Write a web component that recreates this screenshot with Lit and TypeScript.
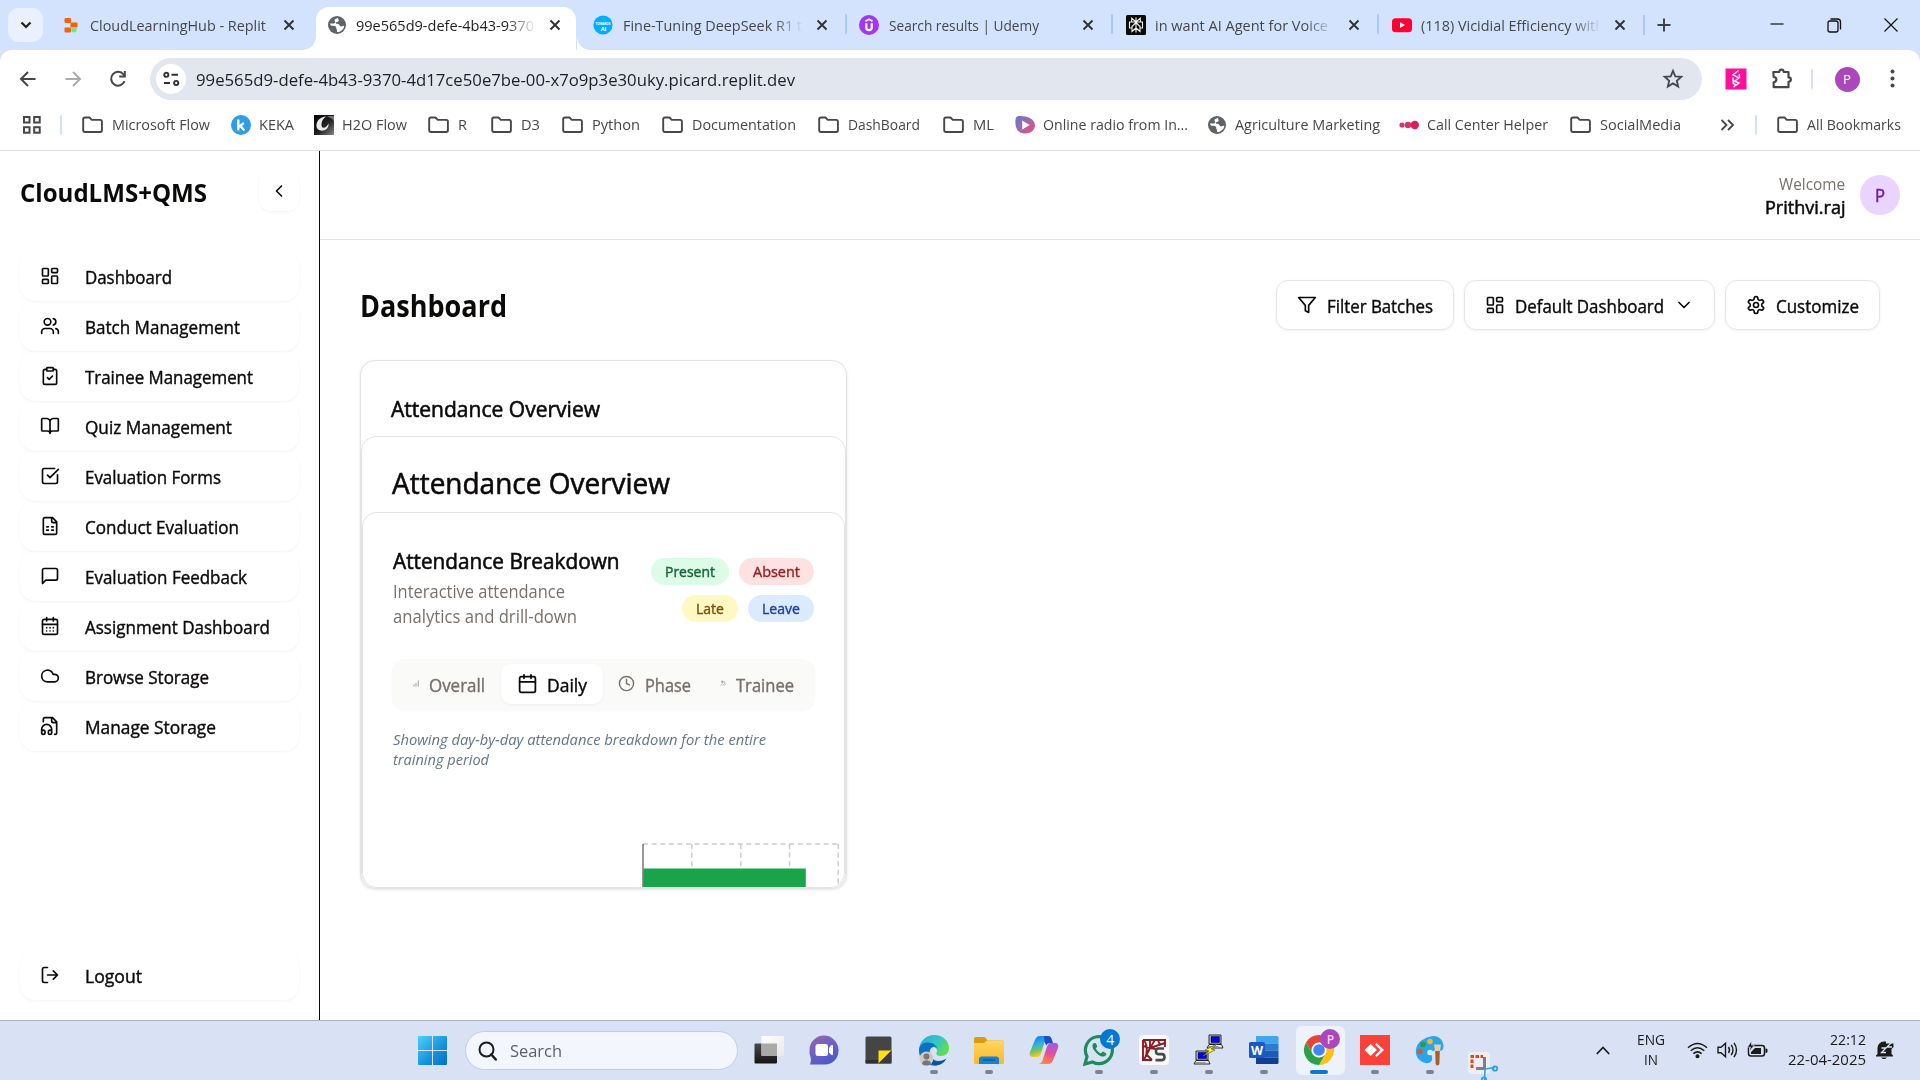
import { LitElement, html, css, svg, nothing } from "lit";
import { customElement, property } from "lit/decorators.js";

/** A single line of text that occupies an exact width. */
@customElement("fit-text")
class FitText extends LitElement {
  static styles = css`
    :host { display: inline-block; white-space: pre; flex: none; }
    .run { display: inline-block; transform-origin: 0 50%; vertical-align: top; }
  `;
  @property() text = "";
  @property({ type: Number }) w = 0;
  updated() {
    const run = this.renderRoot.querySelector(".run") as HTMLElement;
    run.style.transform = "none";
    const natural = run.getBoundingClientRect().width;
    if (natural && this.w) {
      run.style.transform = `scaleX(${this.w / natural})`;
      this.style.width = `${this.w}px`;
    }
  }
  render() {
    return html`<span class="run">${this.text}</span>`;
  }
}

const t = (text: string, w: number) => html`<fit-text .text=${text} .w=${w}></fit-text>`;

const stroke = (size: number, body: unknown, width = 2) => html`
  <svg class="ico" width=${size} height=${size} viewBox="0 0 24 24" fill="none" stroke="currentColor"
    stroke-width=${width} stroke-linecap="round" stroke-linejoin="round">${body}</svg>`;

const P = {
  dash: svg`<rect x="3" y="3" width="7" height="9" rx="1"/><rect x="14" y="3" width="7" height="5" rx="1"/><rect x="14" y="12" width="7" height="9" rx="1"/><rect x="3" y="16" width="7" height="5" rx="1"/>`,
  users: svg`<path d="M16 21v-2a4 4 0 0 0-4-4H6a4 4 0 0 0-4 4v2M22 21v-2a4 4 0 0 0-3-3.87M16 3.13a4 4 0 0 1 0 7.75"/><circle cx="9" cy="7" r="4"/>`,
  clip: svg`<rect x="8" y="2" width="8" height="4" rx="1"/><path d="M16 4h2a2 2 0 0 1 2 2v14a2 2 0 0 1-2 2H6a2 2 0 0 1-2-2V6a2 2 0 0 1 2-2h2M9 14l2 2 4-4"/>`,
  book: svg`<path d="M12 7v14M3 18a1 1 0 0 1-1-1V4a1 1 0 0 1 1-1h5a4 4 0 0 1 4 4 4 4 0 0 1 4-4h5a1 1 0 0 1 1 1v13a1 1 0 0 1-1 1h-6a3 3 0 0 0-3 3 3 3 0 0 0-3-3z"/>`,
  check: svg`<path d="M21 10.5V19a2 2 0 0 1-2 2H5a2 2 0 0 1-2-2V5a2 2 0 0 1 2-2h12.5M9 11l3 3L22 4"/>`,
  sheet: svg`<path d="M15 2H6a2 2 0 0 0-2 2v16a2 2 0 0 0 2 2h12a2 2 0 0 0 2-2V7ZM14 2v4a2 2 0 0 0 2 2h4M8 13h2M14 13h2M8 17h2M14 17h2"/>`,
  msg: svg`<path d="M21 15a2 2 0 0 1-2 2H7l-4 4V5a2 2 0 0 1 2-2h14a2 2 0 0 1 2 2z"/>`,
  days: svg`<rect x="3" y="4" width="18" height="18" rx="2"/><path d="M8 2v4M16 2v4M3 10h18M8 14h.01M12 14h.01M16 14h.01M8 18h.01M12 18h.01M16 18h.01"/>`,
  cal: svg`<rect x="3" y="4" width="18" height="18" rx="2"/><path d="M8 2v4M16 2v4M3 10h18"/>`,
  cloud: svg`<path d="M17.5 19H9a7 7 0 1 1 6.71-9h1.79a4.5 4.5 0 1 1 0 9Z"/>`,
  audio: svg`<path d="M17.5 22h.5a2 2 0 0 0 2-2V7l-5-5H6a2 2 0 0 0-2 2v3M14 2v4a2 2 0 0 0 2 2h4M2 19a2 2 0 1 1 4 0v1a2 2 0 1 1-4 0v-4a6 6 0 0 1 12 0v4a2 2 0 1 1-4 0v-1a2 2 0 1 1 4 0"/>`,
  out: svg`<path d="M16 17l5-5-5-5M21 12H9M9 21H5a2 2 0 0 1-2-2V5a2 2 0 0 1 2-2h4"/>`,
  filter: svg`<path d="M22 3H2l8 9.46V19l4 2v-8.54L22 3z"/>`,
  gear: svg`<path d="M12.22 2h-.44a2 2 0 0 0-2 2v.18a2 2 0 0 1-1 1.73l-.43.25a2 2 0 0 1-2 0l-.15-.08a2 2 0 0 0-2.73.73l-.22.38a2 2 0 0 0 .73 2.73l.15.1a2 2 0 0 1 1 1.72v.51a2 2 0 0 1-1 1.74l-.15.09a2 2 0 0 0-.73 2.73l.22.38a2 2 0 0 0 2.73.73l.15-.08a2 2 0 0 1 2 0l.43.25a2 2 0 0 1 1 1.73V20a2 2 0 0 0 2 2h.44a2 2 0 0 0 2-2v-.18a2 2 0 0 1 1-1.73l.43-.25a2 2 0 0 1 2 0l.15.08a2 2 0 0 0 2.73-.73l.22-.39a2 2 0 0 0-.73-2.73l-.15-.08a2 2 0 0 1-1-1.74v-.5a2 2 0 0 1 1-1.74l.15-.09a2 2 0 0 0 .73-2.73l-.22-.38a2 2 0 0 0-2.73-.73l-.15.08a2 2 0 0 1-2 0l-.43-.25a2 2 0 0 1-1-1.73V4a2 2 0 0 0-2-2z"/><circle cx="12" cy="12" r="3"/>`,
  down: svg`<path d="M6 9l6 6 6-6"/>`,
  left: svg`<path d="M15 18l-6-6 6-6"/>`,
  clock: svg`<circle cx="12" cy="12" r="10"/><path d="M12 6v6l4 2"/>`,
};

const globe = html`<svg class="ico" width="20" height="20" viewBox="0 0 20 20"><circle cx="10" cy="10" r="9" fill="#5f6368"/><path d="M10.500 2.700C9.800 3.900 7.900 3.600 7.500 4.900c-.3 1.200 1 1.500.8 2.600-.2 1-1.800.9-3.300.9H3.100c.2 2 1.200 2.300 2.900 2.400 2 .1 3.200.4 3.200 1.900 0 1.400.8 1.500.8 2.900v1.500c3.800 0 6.800-2.600 7.200-6.100-1.200-.6-1.700.7-3.200.5-1.600-.2-1.400-2-2.900-2.400-1.200-.3-2.300.1-2.300-1 0-1.500 2.200-.9 2.800-2.100.5-1.100-.3-1.900-1.100-3.300z" fill="#fff"/></svg>`;

const folder = html`<svg class="ico" width="23" height="20" viewBox="0 0 23 20"><path d="M2.200 4.200q0-1.700 1.700-1.700h4.600l2.300 2.400h8.400q1.700 0 1.700 1.700v8.700q0 1.700-1.700 1.700H3.900q-1.700 0-1.700-1.700z" fill="none" stroke="#474747" stroke-width="1.900" stroke-linejoin="round"/></svg>`;

const fav = {
  replit: html`<svg class="ico" width="20" height="20" viewBox="0 0 20 20"><rect x="3.500" y="3" width="6.500" height="5" rx="1" fill="#f26207"/><rect x="9.500" y="7.500" width="7" height="5" rx="1" fill="#f26207"/><rect x="3.500" y="12.500" width="6.500" height="5" rx="1" fill="#f26207"/><circle cx="13" cy="14.800" r="2.700" fill="#6ee787"/></svg>`,
  towards: html`<svg class="ico" width="20" height="20" viewBox="0 0 20 20"><circle cx="10" cy="10" r="9.600" fill="#00aeff"/><text x="10" y="10" text-anchor="middle" font-size="3" font-weight="700" fill="#fff" font-family="Open Sans">TOWARDS</text><text x="10.500" y="15.800" text-anchor="middle" font-size="5.500" font-weight="700" fill="#fff" font-family="Open Sans">AI</text></svg>`,
  udemy: html`<svg class="ico" width="20" height="20" viewBox="0 0 20 20"><circle cx="10" cy="10" r="10" fill="#a435f0"/><path d="M6.500 6.300L10 4.200l3.500 2.100" fill="none" stroke="#fff" stroke-width="1.800"/><path d="M7.300 8.300v4.200a2.700 2.700 0 0 0 5.400 0V8.300" fill="none" stroke="#fff" stroke-width="2.200"/></svg>`,
  perplexity: html`<svg class="ico" width="20" height="20" viewBox="0 0 20 20"><rect width="20" height="20" rx="1.500" fill="#0b0b0b"/><path d="M10 2.500v15M10 7L5.700 3.200V7M10 7l4.300-3.800V7M10 7H3.500v6H6M10 7h6.500v6H14M10 7.500L6 11.500v5l4-3.500M10 7.500l4 4v5L10 13" fill="none" stroke="#f3f3ee" stroke-width="1.100"/></svg>`,
  youtube: html`<svg class="ico" width="20" height="20" viewBox="0 0 20 20"><rect x="0" y="3.200" width="20" height="14" rx="3.500" fill="#ff0033"/><path d="M8 7.300v5.600l5-2.800z" fill="#fff"/></svg>`,
};

const bm = {
  keka: html`<svg class="ico" width="20" height="20" viewBox="0 0 20 20"><circle cx="10" cy="10" r="10" fill="#2e9ce6"/><path d="M7.300 4.500v11M12.800 8l-5 3.800M9.300 10.800l4 4.700" stroke="#fff" stroke-width="2.300" fill="none"/></svg>`,
  h2o: html`<svg class="ico" width="20" height="20" viewBox="0 0 20 20"><defs><linearGradient id="h2" x1="0" y1="0" x2="1" y2="1"><stop offset="0" stop-color="#000"/><stop offset=".55" stop-color="#222"/><stop offset="1" stop-color="#888"/></linearGradient></defs><rect width="20" height="20" fill="url(#h2)"/><path d="M12.500 1.500C5.500 2 2 6.500 2.500 11.500c.4 3.800 4.500 5 8.500 3.500 2.500-1 4-4 3.500-6.500-1 2-2.500 4-4.500 4.300-2.200.3-3-2-2.300-5C8.500 4.500 10 2.800 12.500 1.500z" fill="#e8e8e8"/><path d="M13 1l7 0v5c-1.500-2-4-3.500-7-5z" fill="#777"/></svg>`,
  radio: html`<svg class="ico" width="20" height="20" viewBox="0 0 20 20"><defs><linearGradient id="ra" x1="0" y1="0" x2="1" y2="1"><stop offset="0" stop-color="#5b7fc8"/><stop offset=".5" stop-color="#a567a8"/><stop offset="1" stop-color="#f2506c"/></linearGradient></defs><path d="M2 1.500C8 0 20 2.500 20 10.500c0 5-5 8-10 8S1 16 .5 9C.3 6 .3 2.500 2 1.500z" fill="url(#ra)"/><path d="M7.200 5.500v9l7.500-4.500z" fill="#fff"/></svg>`,
  cch: html`<svg class="ico" width="20" height="20" viewBox="0 0 20 20"><circle cx="3" cy="10" r="2.600" fill="#d6336c"/><circle cx="9" cy="10" r="3.200" fill="#d6336c"/><circle cx="15.800" cy="10" r="4.200" fill="#d6205c"/></svg>`,
};

type Tab = { icon: unknown; text: string; w: number; active?: boolean; fade?: boolean; sep?: boolean };
const tabs: Tab[] = [
  { icon: fav.replit, text: "CloudLearningHub - Replit", w: 176 },
  { icon: globe, text: "99e565d9-defe-4b43-9370", w: 178, active: true, fade: true },
  { icon: fav.towards, text: "Fine-Tuning DeepSeek R1 t", w: 179, fade: true },
  { icon: fav.udemy, text: "Search results | Udemy", w: 150, sep: true },
  { icon: fav.perplexity, text: "in want AI Agent for Voice", w: 173, sep: true, fade: true },
  { icon: fav.youtube, text: "(118) Vicidial Efficiency with", w: 183, sep: true, fade: true },
];

const marks: [unknown, string, number, number][] = [
  [folder, "Microsoft Flow", 98, 150],
  [bm.keka, "KEKA", 35, 83],
  [bm.h2o, "H2O Flow", 65, 113],
  [folder, "R", 9, 63],
  [folder, "D3", 19, 71],
  [folder, "Python", 48, 100],
  [folder, "Documentation", 104, 156],
  [folder, "DashBoard", 72, 125],
  [folder, "ML", 21, 73],
  [bm.radio, "Online radio from In...", 145, 192],
  [globe, "Agriculture Marketing", 145, 192],
  [bm.cch, "Call Center Helper", 121, 170],
  [folder, "SocialMedia", 81, 142.5],
];

const nav: [unknown, string, number][] = [
  [P.dash, "Dashboard", 87],
  [P.users, "Batch Management", 155],
  [P.clip, "Trainee Management", 168],
  [P.book, "Quiz Management", 147],
  [P.check, "Evaluation Forms", 136],
  [P.sheet, "Conduct Evaluation", 154],
  [P.msg, "Evaluation Feedback", 162],
  [P.days, "Assignment Dashboard", 185],
  [P.cloud, "Browse Storage", 124],
  [P.audio, "Manage Storage", 131],
];

const app = (body: unknown) => html`<svg class="ico" width="32" height="32" viewBox="0 0 32 32">${body}</svg>`;
const laptop = svg`<path d="M3 1h12v9H3z" fill="#ccc" stroke="#000" stroke-width=".8"/><path d="M5 2.500h8.500v6H5z" fill="#00f" stroke="#000" stroke-width=".5"/><path d="M1 14l2-3.500h12.500L17 14z" fill="#e6e6e6" stroke="#000" stroke-width=".8"/><path d="M2.500 12.500h10" stroke="#888" stroke-width=".8"/>`;

const apps: { icon: unknown; run?: boolean; on?: boolean; badge?: string; low?: boolean; p?: boolean }[] = [
  { icon: app(svg`<defs><linearGradient id="tv" x1="0" y1="0" x2="0" y2="1"><stop offset="0" stop-color="#4a4a4a"/><stop offset="1" stop-color="#151515"/></linearGradient><linearGradient id="tw" x1="0" y1="0" x2="1" y2="1"><stop offset="0" stop-color="#fff"/><stop offset="1" stop-color="#e8e8e8"/></linearGradient></defs><rect x="1.500" y="9.500" width="22.500" height="20" rx="1" fill="url(#tv)"/><rect x="8.500" y="2" width="22.500" height="20" rx="1" fill="url(#tw)"/><path d="M8.500 9.500H24V22H9.500a1 1 0 0 1-1-1z" fill="#a9a9a9"/>`) },
  { icon: app(svg`<defs><linearGradient id="tm" x1="0" y1="0" x2=".5" y2="1"><stop offset="0" stop-color="#9a6a98"/><stop offset=".45" stop-color="#7462c4"/><stop offset="1" stop-color="#5058c8"/></linearGradient></defs><path d="M16 1.500a14.500 15 0 0 1 14.500 15C30.500 25 24 31 16 30.500H2c1-3 1-5 .8-6.500A15 15 0 0 1 1.500 16 14.500 14.500 0 0 1 16 1.500z" fill="url(#tm)"/><rect x="7.500" y="10" width="12.500" height="12" rx="2.500" fill="#fff"/><path d="M21 13.500l2.500-2.500q1.500-.5 1.500 1v8q0 1.500-1.500 1L21 18.500z" fill="#fff"/>`) },
  { icon: app(svg`<rect x="2.500" y="2.500" width="26" height="27" rx="1.500" fill="#454545"/><rect x="2.500" y="26" width="13" height="3.500" fill="#303030"/><path d="M15.500 16.500h13l-13 13z" fill="#ffde14"/><path d="M15.500 29.500l13-13v13z" fill="#3b3b3b"/>`) },
  { run: true, icon: app(svg`<defs><linearGradient id="e1" x1="0" y1="0" x2="1" y2=".5"><stop offset="0" stop-color="#2aa8e0"/><stop offset=".6" stop-color="#33c6c8"/><stop offset="1" stop-color="#5fdc55"/></linearGradient></defs><path d="M1 17C1 8 7 1 16.500 1 25 1 31 7 31 14c0 5-3.500 8-8 8-3.500 0-5.500-1.500-4.500-3 1.500-2.500 0-6-4-6C9 13 4 14 1 17z" fill="url(#e1)"/><path d="M1 17c0-6 4-8.500 9-8.500 5 0 8.500 3 9.500 6-1.500-1.500-3-2-4.500-1.500-4 1.500-4.500 7-1 11 3 3.500 8 4 14 1-2.500 4.500-7 6.500-12 6.500C8 31.500 1 25 1 17z" fill="#0f6fc4"/><path d="M12.500 16c-1.500 4 .5 10 6 11.500 3 .8 7-.5 10-3-2.500 4.500-7 7-12 7-4-1-7-10-4-15.500z" fill="#0d52a0"/><circle cx="8.500" cy="24.500" r="7" fill="#cfcac3"/><circle cx="8.500" cy="22.500" r="3" fill="#777"/><path d="M4 30c0-5 9-5 9 0-2.500 2-6.500 2-9 0z" fill="#777"/>`) },
  { run: true, icon: app(svg`<defs><linearGradient id="fo" x1="0" y1="0" x2="0" y2="1"><stop offset="0" stop-color="#ffd75e"/><stop offset="1" stop-color="#f9b82a"/></linearGradient></defs><path d="M1 5q0-2 2-2h8q1.500 0 2 1.500l1.500 2H29q2 0 2 2V14H1z" fill="#dd9a0c"/><path d="M1 9h10l3-2.500h15q2 0 2 2v20q0 1.500-2 1.500H3q-2 0-2-1.500z" fill="url(#fo)"/><path d="M6 30v-5q0-2.500 2.500-2.500h15q2.500 0 2.500 2.500v5z" fill="#1582d2"/><path d="M10 26h12" stroke="#0a5596" stroke-width="1.300"/>`) },
  { icon: app(svg`<defs><linearGradient id="c1" x1="0" y1="0" x2=".3" y2="1"><stop offset="0" stop-color="#1a6fe0"/><stop offset=".45" stop-color="#2bb0e0"/><stop offset=".75" stop-color="#7cc45a"/><stop offset="1" stop-color="#ffc928"/></linearGradient><linearGradient id="c2" x1=".6" y1="0" x2=".3" y2="1"><stop offset="0" stop-color="#a259e8"/><stop offset=".5" stop-color="#e8508c"/><stop offset="1" stop-color="#ff8a3c"/></linearGradient></defs><path d="M13 30h7c3 0 4.500-2 5.500-5l4.500-11c1-3-.5-5-3-5h-4c-2.500 0-3.500 2-4.500 5l-3.500 11c-.6 2-2 5-4.500 5z" fill="url(#c2)"/><path d="M19 2h-7C9 2 7.500 4 6.500 7L2 18c-1 3 .5 5 3 5h4c2.500 0 3.500-2 4.500-5L17 7c.6-2 2-5 4.500-5z" fill="url(#c1)"/><path d="M16 2h4.500c2 0 3 2 3.500 4l1 3h-3c-2 0-3 1.200-3.700 2.500L16.500 8z" fill="#1d4fc4"/>`) },
  { run: true, badge: "4", icon: app(svg`<path d="M2 30l2-7.500A13.500 13.500 0 1 1 9.500 28z" fill="none" stroke="#1f8a5b" stroke-width="3.200"/><path d="M11 9c-2 1.500-2.300 4 .5 7.800 3.500 4.700 7.500 7 10.500 5.200 1.500-1 1.500-2.200 1-2.700l-3.200-1.700-2 1.800c-2-.8-4-2.700-5-4.900l1.500-2L13 9.200z" fill="#1f8a5b"/>`) },
  { run: true, icon: app(svg`<rect x="1" y="1" width="30" height="30" rx="4" fill="#f8f8f8"/><path d="M5 6h22v7M5 6v20h9M5 6c5 3 5 16 0 20M12 6v8L27 9M5 12l7 2 5-8M8 20l6 6M12 14l-3 6M12 14l6 1M20 6l2 5" fill="none" stroke="#8c1c24" stroke-width="1.900"/><path d="M26 14.500h-6q-2 0-2 2.800t2 2.800h4q2.500 0 2.500 3t-2.500 3h-6.500" fill="none" stroke="#4a4a4a" stroke-width="2.600"/>`) },
  { run: true, icon: app(svg`<g transform="translate(13 0)">${laptop}</g><g transform="translate(0 16)">${laptop}</g><path d="M24 10l-12 6 4 1-6 5 12-6-4-1z" fill="#ff0" stroke="#555" stroke-width=".7"/>`) },
  { run: true, icon: app(svg`<path d="M8 2h21q1.500 0 1.500 1.500V9.500H8z" fill="#41a5ee"/><path d="M8 9.500h22.500v7H8z" fill="#2b7cd3"/><path d="M8 16.500h22.500v7H8z" fill="#185abd"/><path d="M8 23.500h22.500v5q0 1.500-1.500 1.500H8z" fill="#103f91"/><rect x="1" y="8" width="16" height="16" rx="1.500" fill="#185abd"/><text x="9" y="20.500" text-anchor="middle" font-size="12.500" font-weight="700" fill="#fff" font-family="Open Sans">W</text>`) },
  { on: true, p: true, icon: app(svg`<circle cx="16" cy="16" r="15" fill="#fff"/><path d="M16 1a15 15 0 0 1 13 7.500H16A7.500 7.500 0 0 0 9.500 19.700L3 8.500A15 15 0 0 1 16 1z" fill="#ea4335"/><path d="M29 8.500A15 15 0 0 1 16 31l6.500-11.300A7.500 7.500 0 0 0 16 8.500z" fill="#fbc116"/><path d="M3 8.500l6.500 11.200a7.500 7.500 0 0 0 13 0L16 31A15 15 0 0 1 3 8.500z" fill="#28a148"/><circle cx="16" cy="16" r="7.200" fill="#fff"/><circle cx="16" cy="16" r="5.800" fill="#4285f4"/>`) },
  { run: true, icon: app(svg`<rect x="1" y="1" width="30" height="30" fill="#fb4139"/><path d="M5.500 16l6.200-6 6.200 6-6.200 6z" fill="#fff"/><path d="M16 10.500l1.500-1.500 7.500 7-7.500 7-1.500-1.500 5.500-5.500z" fill="#fff"/>`) },
  { run: true, icon: app(svg`<path d="M15 3C22 0 29 4 29.500 12c0 6-4 5-8 4.500-4-.3-4.500 3-3.500 6.500 1 4-2.500 7-6.500 6C5 27.500 1 22 2 15.500 3 9 8 5 15 3z" fill="#2aa5ea"/><circle cx="9" cy="10.500" r="2.800" fill="#2d9b3f"/><circle cx="16" cy="7.500" r="2.800" fill="#f6b91c"/><circle cx="6" cy="17.500" r="2.800" fill="#d75836"/><circle cx="16" cy="18.500" r="2.800" fill="#d5f0ff"/><path d="M20 10.500h7l-1 6.500h-5z" fill="#e8cdaa"/><path d="M21.200 17h4.600l-.4 13q-1.900 3-3.800 0z" fill="#a4622a"/>`) },
  { low: true, run: true, icon: app(svg`<rect x="0" y="0" width="22" height="22" rx="3" fill="#eeeef0"/><path d="M4 16V4.500h11" fill="none" stroke="#e0451f" stroke-width="3" stroke-dasharray="3.500 1.500"/><path d="M15 5h3v13H8v-3h7z" fill="#7e7e86"/><path d="M17 17l10-1.500M17 17l-.5 11" stroke="#2ca1e2" stroke-width="1.600"/><circle cx="27" cy="16.500" r="2.200" fill="none" stroke="#2ca1e2" stroke-width="1.800"/><circle cx="16" cy="27.500" r="2.200" fill="none" stroke="#2ca1e2" stroke-width="1.800"/>`) },
];

@customElement("app-root")
class AppRoot extends LitElement {
  static styles = css`
    :host {
      display: flex; flex-direction: column; width: 1920px; height: 1080px; overflow: hidden;
      font-family: "Open Sans", "Noto Sans", sans-serif; background: #fff; color: #0c0a09;
    }
    * { box-sizing: border-box; }
    .ico { display: block; flex: none; overflow: visible; }

    /* browser tab strip */
    .strip { height: 50px; flex: none; background: #d3e3fd; display: flex; align-items: stretch; }
    .tabsearch { width: 35px; height: 34px; margin: 8px 4px 0 8px; border-radius: 11px; background: #e9f1fe; display: grid; place-items: center; color: #1f1f1f; }
    .tab { width: 266.300px; flex: none; padding: 7px 3px 0; position: relative; color: #45474a; font-size: 14.800px; }
    .tab.sep::before { content: ""; position: absolute; left: -1px; top: 14px; width: 2px; height: 20px; border-radius: 1px; background: #a8c7fa; }
    .tabin { height: 43px; padding: 0 0 7px 10.500px; display: flex; align-items: center; }
    .tab.active { color: #1f1f1f; }
    .tab.active .tabin { background: #fff; border-radius: 13px 13px 0 0; width: 260px; }
    .tab.active::before, .tab.active::after { content: ""; position: absolute; bottom: 0; width: 13px; height: 13px; }
    .tab.active::before { left: -10px; background: radial-gradient(circle at 0 0, #d3e3fd 12.500px, #fff 13px); }
    .tab.active::after { right: -10px; background: radial-gradient(circle at 100% 0, #d3e3fd 12.500px, #fff 13px); }
    .title { width: 184px; margin: 0 3px 1px 9.500px; overflow: hidden; white-space: nowrap; line-height: 22px; display: flex; }
    .title.fade { -webkit-mask-image: linear-gradient(90deg, #000 150px, transparent 180px); mask-image: linear-gradient(90deg, #000 150px, transparent 180px); }
    .x { width: 24px; display: grid; place-items: center; color: #303134; }
    .plus { width: 40px; display: grid; place-items: center; color: #3c3f43; position: relative; left: -1px; }
    .plus::before { content: ""; position: absolute; left: -1px; top: 15px; width: 2px; height: 20px; background: #a8c7fa; }
    .win { margin-left: auto; display: flex; align-items: center; padding-right: 19px; gap: 37px; color: #111; }

    /* toolbar */
    .corner { background: #d3e3fd; flex: none; }
    .toolbar { height: 59px; background: #fff; border-radius: 12px 12px 0 0; display: flex; align-items: center; padding: 0 0 1px 16px; color: #474747; }
    .navs { display: flex; gap: 21px; width: 134px; }
    .omni { width: 1552px; height: 42px; border-radius: 21px; background: #e1e6ef; display: flex; align-items: center; padding: 0 17px 0 6px; font-size: 17.200px; color: #1f1f1f; }
    .site { width: 30px; height: 30px; border-radius: 50%; background: #fff; display: grid; place-items: center; margin-right: 10px; }
    .omni .star { margin-left: auto; color: #474747; }
    .tools { display: flex; align-items: center; flex: 1; padding-left: 22.500px; }
    .puzzle { margin: 0 16px 0 22px; }
    .vr { width: 2px; height: 20px; background: #d3e3fd; border-radius: 1px; }
    .ava { width: 25px; height: 25px; border-radius: 50%; background: #ab47bc; color: #fff; font-size: 13px; display: grid; place-items: center; margin: 0 30px 0 22px; }
    .bar { height: 42px; flex: none; display: flex; align-items: center; padding: 0 0 10px 22px; font-size: 14.800px; color: #45474a; border-bottom: 1px solid #dedfe1; }
    .bar .vr { margin: 0 19px 0 18px; }
    .bar .vr.end { margin: 0 19px 0 15px; }
    .mark { display: flex; align-items: center; gap: 8px; flex: none; line-height: 22px; }
    .mark fit-text { margin-bottom: 1px; }

    /* page */
    .page { flex: 1; min-height: 0; display: flex; }
    .side { width: 320px; flex: none; border-right: 1.500px solid #0a0a0a; display: flex; flex-direction: column; padding: 20px 20px 20px; }
    .brand { display: flex; justify-content: space-between; align-items: center; height: 40px; margin-bottom: 40px; font-size: 24.500px; font-weight: 700; line-height: 34px; }
    .brand fit-text { margin-top: 4px; }
    .soft { box-shadow: 0 1px 3px rgba(0, 0, 0, .055); }
    .fold { width: 40px; height: 40px; border-radius: 12px; display: grid; place-items: center; }
    .item, .btn, .seg { -webkit-text-stroke: .4px currentColor; }
    .item { height: 50px; flex: none; border-radius: 15px; display: flex; align-items: center; padding-left: 20px; font-size: 17.300px; line-height: 24px; }
    .item .ico { margin-right: 25px; margin-bottom: 1px; }
    .item fit-text { margin-top: 3px; }
    .item.out { margin-top: auto; }
    .main { flex: 1; display: flex; flex-direction: column; }
    .head { height: 89px; flex: none; border-bottom: 1px solid #e3e3e3; display: flex; justify-content: flex-end; align-items: center; padding: 0 20px 1px 0; gap: 15px; }
    .who { display: flex; flex-direction: column; align-items: flex-end; font-size: 15.500px; color: #78716c; line-height: 24px; padding-top: 2px; }
    .who .name { font-size: 17.300px; -webkit-text-stroke: .5px currentColor; color: #0c0a09; }
    .face { width: 40px; height: 40px; border-radius: 50%; background: #e9d5ff; color: #6b21a8; font-size: 17.300px; -webkit-text-stroke: .5px currentColor; display: grid; place-items: center; padding-top: 1px; }
    .body { padding: 40px; }
    .titlebar { height: 50px; display: flex; align-items: center; gap: 10px; margin-bottom: 30px; }
    .h1 { font-size: 29.500px; font-weight: 700; line-height: 40px; margin-right: auto; padding-top: 1px; }
    .btn { height: 50px; border: 1px solid #e5e5e5; border-radius: 12px; box-shadow: 0 1px 3px rgba(0,0,0,.06); display: flex; align-items: center; padding: 0 20px; font-size: 17.300px; }
    .btn fit-text { margin: 2px 0 0 10.500px; }
    .btn.wide fit-text { margin-left: 9.500px; }
    .btn .last { margin-left: 10px; }

    .card { border: 1px solid #e3e3e3; border-radius: 15px; overflow: hidden; background: #fff; }
    .c1 { width: 487px; height: 529px; box-shadow: 0 1px 3px rgba(0,0,0,.1); }
    .c1 > .c2 { height: 452px; }
    .c2 > .c3 { height: 375px; border-bottom: 0; }
    .ch { height: 75px; -webkit-text-stroke: .6px currentColor; font-size: 22px; line-height: 30px; padding: 32px 30px 0; }
    .ch.big { font-size: 29px; line-height: 38px; padding-top: 27px; }
    .ch3 { display: flex; justify-content: space-between; padding: 32px 30px 0 30px; }
    .ct { -webkit-text-stroke: .6px currentColor; font-size: 22px; line-height: 30px; margin-bottom: 4px; display: flex; }
    .cd { font-size: 17.300px; line-height: 25px; color: #78716c; display: flex; }
    .badges { width: 170px; display: flex; flex-wrap: wrap; gap: 10px; justify-content: flex-end; align-content: flex-start; padding-top: 13px; font-size: 14.800px; -webkit-text-stroke: .4px currentColor; }
    .badge { height: 27px; border-radius: 14px; display: flex; align-items: center; padding: 0 14px 2px; }
    .g { background: #dcfce7; color: #166534; }
    .r { background: #fee2e2; color: #991b1b; }
    .y { background: #fef9c3; color: #854d0e; }
    .b { background: #dbeafe; color: #1e40af; }
    .seg { width: 423px; height: 51px; margin: 30px 0 0 29px; padding: 5px 5px 6px; background: #fafaf9; border-radius: 13px; display: flex; box-shadow: 0 1px 2px rgba(0,0,0,.03); color: #78716c; font-size: 17.300px; }
    .sg { height: 40px; border-radius: 10px; display: flex; align-items: center; }
    .sg .ico { margin-bottom: 2px; }
    .sg fit-text { margin-top: 2px; }
    .s1 { width: 104px; padding-left: 16px; gap: 9px; }
    .s2 { width: 102px; padding-left: 15.500px; gap: 9.500px; background: #fff; color: #0c0a09; box-shadow: 0 1px 3px rgba(0,0,0,.06); }
    .s3 { width: 103px; padding-left: 14.500px; gap: 10.500px; }
    .s4 { width: 104px; padding-left: 14px; gap: 10px; }
    .note { font-style: italic; font-size: 14.800px; line-height: 20px; color: #64748b; margin: 19px 0 0 30px; display: flex; flex-direction: column; }
    .chart { display: block; margin: 73px 0 0 279px; }

    /* taskbar */
    .task { height: 60px; flex: none; border-top: 1px solid #a9b1c2; background: #d8e2f4; display: flex; padding-left: 405px; color: #1b1b1b; }
    .start { width: 60px; padding: 15px 0 0 13px; }
    .search { width: 273px; height: 39px; margin: 10px 4px 0 0; border-radius: 20px; border: 1px solid #c3cde2; background: #f3f6fc; display: flex; align-items: center; padding-left: 11px; font-size: 17px; color: #5c5f66; gap: 12px; }
    .slot { width: 55.050px; height: 59px; position: relative; padding: 13px 0 0 11px; }
    .slot.low { padding: 31px 0 0 10px; height: 59px; overflow: hidden; }
    .slot.on::before { content: ""; position: absolute; inset: 5px 3px 5px 4px; border-radius: 6px; background: #eef2fa; }
    .slot .ico { position: relative; }
    .dot { position: absolute; left: 23px; bottom: 6px; width: 8px; height: 4px; border-radius: 2px; background: #7d828c; }
    .on .dot { left: 18px; width: 18px; background: #0a78d4; }
    .bdg { position: absolute; left: 28px; top: 8px; width: 20px; height: 20px; border-radius: 50%; background: #0078d4; color: #fff; font-size: 14px; display: grid; place-items: center; }
    .bdg.p { background: #ab47bc; color: #f3d9f7; font-size: 12px; font-weight: 600; }
    .tray { margin-left: auto; display: flex; align-items: center; padding: 0 25px 1px 0; font-size: 14.800px; line-height: 20px; }
    .lang { display: flex; flex-direction: column; align-items: center; width: 40px; margin: 0 16px 2px 21px; }
    .sys { display: flex; gap: 9px; margin-right: 20px; }
    .when { display: flex; flex-direction: column; align-items: flex-end; margin: 0 9px 2px 0; }
  `;

  private tab(o: Tab) {
    return html`<div class="tab ${o.active ? "active" : ""} ${o.sep ? "sep" : ""}">
      <div class="tabin">${o.icon}<div class="title ${o.fade ? "fade" : ""}">${t(o.text, o.w)}</div>
      <div class="x"><svg class="ico" width="12" height="12" viewBox="0 0 12 12"><path d="M1.500 1.500l9 9M10.500 1.500l-9 9" stroke="currentColor" stroke-width="1.900"/></svg></div></div>
    </div>`;
  }

  private chrome() {
    return html`
      <div class="strip">
        <div class="tabsearch"><svg class="ico" width="12" height="8" viewBox="0 0 12 8"><path d="M1.500 1.500L6 6l4.500-4.500" fill="none" stroke="currentColor" stroke-width="2.200"/></svg></div>
        ${tabs.map((o) => this.tab(o))}
        <div class="plus"><svg class="ico" width="14" height="14" viewBox="0 0 14 14"><path d="M7 .5v13M.5 7h13" stroke="currentColor" stroke-width="1.900"/></svg></div>
        <div class="win">
          <svg class="ico" width="20" height="20" viewBox="0 0 20 20"><path d="M3.500 9h13" stroke="currentColor" stroke-width="1.200"/></svg>
          <svg class="ico" width="20" height="20" viewBox="0 0 20 20"><rect x="4" y="6" width="10" height="11" rx="2" fill="none" stroke="currentColor" stroke-width="1.300"/><path d="M6.500 4h7q3 0 3 3v7.500" fill="none" stroke="currentColor" stroke-width="1.300"/></svg>
          <svg class="ico" width="20" height="20" viewBox="0 0 20 20"><path d="M3.500 3.500l13 13M16.500 3.500l-13 13" stroke="currentColor" stroke-width="1.200"/></svg>
        </div>
      </div>
      <div class="corner"><div class="toolbar">
        <div class="navs">
          <svg class="ico" width="24" height="24" viewBox="0 0 24 24"><path d="M12 5l-7 7 7 7M5 12h14.500" fill="none" stroke="#474747" stroke-width="2"/></svg>
          <svg class="ico" width="24" height="24" viewBox="0 0 24 24"><path d="M12 5l7 7-7 7M19 12H4.500" fill="none" stroke="#ababab" stroke-width="2"/></svg>
          <svg class="ico" width="24" height="24" viewBox="0 0 24 24"><path d="M18.500 14.200A6.900 6.900 0 1 1 17.500 7.500L18.700 9" fill="none" stroke="#474747" stroke-width="2"/><path d="M18.800 4v5.600h-5.600" fill="none" stroke="#474747" stroke-width="2"/></svg>
        </div>
        <div class="omni">
          <div class="site"><svg class="ico" width="17" height="16" viewBox="0 0 17 16" fill="none" stroke="#303134" stroke-width="1.900"><circle cx="3.300" cy="3.800" r="2.100"/><path d="M8.500 3.800h6.500M1 12h6"/><circle cx="13.200" cy="12" r="2.100"/></svg></div>
          ${t("99e565d9-defe-4b43-9370-4d17ce50e7be-00-x7o9p3e30uky.picard.replit.dev", 599)}
          <svg class="ico star" width="24" height="24" viewBox="0 0 24 24"><path d="M12 3.800l2.300 5.500 6 .5-4.500 3.900 1.400 5.900-5.200-3.200-5.200 3.200 1.400-5.900-4.500-3.900 6-.5z" fill="none" stroke="currentColor" stroke-width="1.800"/></svg>
        </div>
        <div class="tools">
          <svg class="ico" width="22" height="22" viewBox="0 0 22 22"><rect x=".5" y=".5" width="21" height="21" fill="#ff0f9b"/><path d="M13.500 2.500L8 6.800l6 3.200M14.300 6l.2 3.500-6 4.500M8 9.500v3l6 2.500-5.500 4M8.300 12.500l-.1 3 3 1.500" fill="none" stroke="#fff" stroke-width="1.400"/></svg>
          <svg class="ico puzzle" width="26" height="26" viewBox="0 0 24 24"><path d="M4 5.500h5.500q0-2.200 2-2.200t2 2.200H18v5q2.200 0 2.200 2t-2.200 2v5H4.300V15q2.500-.3 2.500-2.500T4.300 10z" fill="none" stroke="#474747" stroke-width="2" stroke-linejoin="round"/></svg>
          <div class="vr"></div><div class="ava">P</div>
          <svg class="ico" width="5" height="24" viewBox="0 0 5 24" fill="#474747"><circle cx="2.500" cy="4.500" r="2"/><circle cx="2.500" cy="11.500" r="2"/><circle cx="2.500" cy="18.500" r="2"/></svg>
        </div>
      </div></div>
      <div class="bar">
        <svg class="ico" width="20" height="20" viewBox="0 0 20 20" fill="none" stroke="#474747" stroke-width="2"><rect x="2" y="2" width="5.500" height="5.500"/><rect x="12.200" y="2" width="5.500" height="5.500"/><rect x="2" y="12.200" width="5.500" height="5.500"/><rect x="12.200" y="12.200" width="5.500" height="5.500"/></svg>
        <div class="vr"></div>
        ${marks.map(([icon, text, w, full]) => html`<div class="mark" style="width:${full}px">${icon}${t(text, w)}</div>`)}
        <svg class="ico" width="28" height="16" viewBox="0 0 28 16"><path d="M9.500 3l5 5-5 5M16 3l5 5-5 5" fill="none" stroke="#474747" stroke-width="1.800"/></svg>
        <div class="vr end"></div>
        <div class="mark">${folder}${t("All Bookmarks", 94)}</div>
      </div>`;
  }

  private card() {
    return html`<div class="card c1">
      <div class="ch">${t("Attendance Overview", 209)}</div>
      <div class="card c2">
        <div class="ch big">${t("Attendance Overview", 278)}</div>
        <div class="card c3">
          <div class="ch3">
            <div><div class="ct">${t("Attendance Breakdown", 226.5)}</div>
              <div class="cd">${t("Interactive attendance", 172)}</div>
              <div class="cd">${t("analytics and drill-down", 184)}</div></div>
            <div class="badges">
              <div class="badge g">${t("Present", 50)}</div><div class="badge r">${t("Absent", 47)}</div>
              <div class="badge y">${t("Late", 28)}</div><div class="badge b">${t("Leave", 38)}</div>
            </div>
          </div>
          <div class="seg">
            <div class="sg s1"><svg class="ico" width="7" height="7" viewBox="0 0 7 7"><path d="M1 4.500v2M3 3v3.500M5.300.5v6" stroke="#b5b1ae" stroke-width="1.300"/></svg>${t("Overall", 56)}</div>
            <div class="sg s2">${stroke(21, P.cal)}${t("Daily", 40)}</div>
            <div class="sg s3">${stroke(17, P.clock)}${t("Phase", 46)}</div>
            <div class="sg s4"><svg class="ico" width="6" height="6" viewBox="0 0 6 6"><circle cx="2.300" cy="1.800" r="1.200" fill="#aaa6a2"/><path d="M.5 5.500q2-3 4 0M4 1l1.500 4" fill="none" stroke="#bbb7b4"/></svg>${t("Trainee", 58)}</div>
          </div>
          <div class="note">${t("Showing day-by-day attendance breakdown for the entire", 373)}${t("training period", 96)}</div>
          <svg class="chart" width="200" height="60" viewBox="0 0 200 60">
            <g stroke="#ccc" stroke-dasharray="5 3.600" stroke-width="1.500" fill="none"><path d="M1 2h196M49.800 2v60M98.800 2v60M147.500 2v60M196.300 2v60"/></g>
            <path d="M1 2v60" stroke="#777" stroke-width="1.500"/>
            <rect x="1.300" y="26.500" width="162.500" height="40" fill="#19a34a"/>
          </svg>
        </div>
      </div>
    </div>`;
  }

  private taskbar() {
    return html`<div class="task">
      <div class="start"><svg class="ico" width="29" height="29" viewBox="0 0 29 29"><defs><linearGradient id="wi" x1="0" y1="0" x2="1" y2="1"><stop offset="0" stop-color="#4fd0fb"/><stop offset=".6" stop-color="#1590dc"/><stop offset="1" stop-color="#0670c8"/></linearGradient></defs><path d="M1 0h13v14H0V1q0-1 1-1zM15 0h13q1 0 1 1v13H15zM0 15h14v14H1q-1 0-1-1zM15 15h14v13q0 1-1 1H15z" fill="url(#wi)"/></svg></div>
      <div class="search"><svg class="ico" width="21" height="20" viewBox="0 0 21 20"><circle cx="9.500" cy="8.500" r="7" fill="none" stroke="#1d1d1d" stroke-width="2"/><path d="M14.300 13.500l4.500 5" stroke="#1d1d1d" stroke-width="2.500" stroke-linecap="round"/></svg>${t("Search", 52)}</div>
      ${apps.map((a) => html`<div class="slot ${a.on ? "on" : ""} ${a.low ? "low" : ""}">
        ${a.run || a.on ? html`<div class="dot"></div>` : nothing}${a.icon}
        ${a.badge ? html`<div class="bdg">${a.badge}</div>` : nothing}${a.p ? html`<div class="bdg p">P</div>` : nothing}
      </div>`)}
      <div class="tray">
        <svg class="ico" width="14" height="9" viewBox="0 0 14 9"><path d="M.8 8L7 1.500 13.200 8" fill="none" stroke="currentColor" stroke-width="1.700"/></svg>
        <div class="lang">${t("ENG", 28)}${t("IN", 14)}</div>
        <div class="sys">
          <svg class="ico" width="21" height="18" viewBox="0 0 21 18" fill="none" stroke="currentColor" stroke-width="1.500"><path d="M1 6.800q9.500-8.600 19 0M3.700 9.800q6.800-6 13.600 0M6.300 12.600q4.200-3.500 8.400 0"/><circle cx="10.500" cy="15.200" r="1.300" fill="currentColor"/></svg>
          <svg class="ico" width="21" height="18" viewBox="0 0 21 18" fill="none" stroke="currentColor" stroke-width="1.400"><path d="M1 6.200h3l4.500-4v13.600l-4.500-4H1zM11.500 6q2 3 0 6M14.200 3.800q3.600 5.200 0 10.400M17 1.800q5 7.200 0 14.400"/></svg>
          <svg class="ico" width="21" height="18" viewBox="0 0 21 18"><rect x="1.500" y="4.500" width="16" height="10.500" rx="2.500" fill="none" stroke="currentColor" stroke-width="1.500"/><path d="M4 13V11l4-4h6v6zM18.500 7.500q2 0 2 1v2q0 1.500-2 1.500z" fill="currentColor"/><path d="M4.500 0L.5 6.200h3l-1 4 4.700-6H4.500z" fill="currentColor" stroke="#d8e2f4" stroke-width=".6"/></svg>
        </div>
        <div class="when">${t("22:12", 36)}${t("22-04-2025", 78)}</div>
        <svg class="ico" width="20" height="20" viewBox="0 0 20 20"><path d="M2.500 14V8Q3 2 9 1.500h2v2h7.500V7l-2 2v5l1.500 1.500v1H1v-1zM6 17.500h6q-3 3-6 0z" fill="currentColor"/><path d="M12 2h5l-5 5h5M6.500 8h4.500l-4.500 4.500H11" fill="none" stroke="#d8e2f4" stroke-width="1.300"/></svg>
      </div>
    </div>`;
  }

  render() {
    return html`${this.chrome()}
      <div class="page">
        <div class="side">
          <div class="brand">${t("CloudLMS+QMS", 187)}<div class="fold soft">${stroke(20, P.left)}</div></div>
          ${nav.map(([icon, text, w]) => html`<div class="item soft">${stroke(20, icon)}${t(text, w)}</div>`)}
          <div class="item out soft">${stroke(20, P.out)}${t("Logout", 57)}</div>
        </div>
        <div class="main">
          <div class="head"><div class="who">${t("Welcome", 66)}<div class="name">${t("Prithvi.raj", 80.5)}</div></div><div class="face">${t("P", 10)}</div></div>
          <div class="body">
            <div class="titlebar"><div class="h1">${t("Dashboard", 147)}</div>
              <div class="btn">${stroke(20, P.filter)}${t("Filter Batches", 106)}</div>
              <div class="btn wide">${stroke(20, P.dash)}${t("Default Dashboard", 149)}<span class="last">${stroke(20, P.down)}</span></div>
              <div class="btn">${stroke(20, P.gear)}${t("Customize", 83)}</div>
            </div>
            ${this.card()}
          </div>
        </div>
      </div>
      ${this.taskbar()}`;
  }
}
